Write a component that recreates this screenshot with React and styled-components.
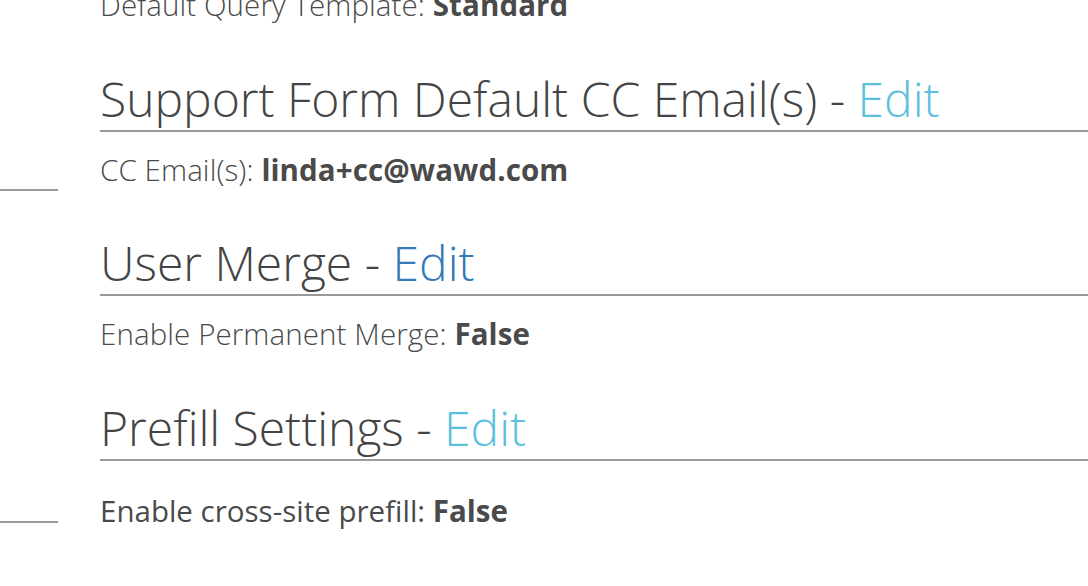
import styled, { createGlobalStyle } from "styled-components";

const GlobalStyle = createGlobalStyle`
  html, body {
    margin: 0;
    padding: 0;
    background: #fff;
    overflow: hidden;
  }
  body {
    font-family: "Open Sans", "Liberation Sans", sans-serif;
    color: #4a4a4a;
  }
`;

const Page = styled.div`
  display: flex;
  width: 1088px;
  height: 586px;
  overflow: hidden;
`;

const Sidebar = styled.nav`
  flex: 0 0 58px;
  display: flex;
  flex-direction: column;
`;

const NavItem = styled.div`
  height: ${(p) => p.$height}px;
  border-bottom: 2px solid #9a9a9a;
`;

const Main = styled.main`
  flex: 1;
  margin-left: 42px;
  margin-top: -14px;
  margin-right: -40px;
`;

const Field = styled.p`
  margin: ${(p) => p.$gap || 0}px 0 0;
  font-size: 29.5px;
  line-height: 37.8px;
  font-weight: ${(p) => (p.$label ? 400 : 300)};
  letter-spacing: ${(p) => (p.$label ? 0 : 0.1)}px;
  white-space: nowrap;

  b {
    font-weight: 700;
  }
`;

const Heading = styled.h2`
  margin: 49px 0 0;
  padding-bottom: 4px;
  font-size: 48px;
  line-height: 1.1;
  font-weight: 300;
  color: #444;
  border-bottom: 2px solid #9a9a9a;
  white-space: nowrap;
`;

const EditLink = styled.a`
  color: ${(p) => (p.$visited ? "#337ab7" : "#5bc0de")};
  text-decoration: none;
  cursor: pointer;
`;

const sections = [
  {
    title: "Support Form Default CC Email(s)",
    label: "CC Email(s):",
    value: "linda+cc@wawd.com",
  },
  {
    title: "User Merge",
    label: "Enable Permanent Merge:",
    value: "False",
    visited: true,
  },
  {
    title: "Prefill Settings",
    label: "Enable cross-site prefill:",
    value: "False",
    isLabel: true,
    gap: 31,
  },
];

export default function App() {
  return (
    <>
      <GlobalStyle />
      <Page>
        <Sidebar>
          <NavItem $height={189} />
          <NavItem $height={330} />
        </Sidebar>
        <Main>
          <Field>
            Default Query Template: <b>Standard</b>
          </Field>
          {sections.map((s) => (
            <section key={s.title}>
              <Heading>
                {s.title} - <EditLink $visited={s.visited}>Edit</EditLink>
              </Heading>
              <Field $gap={s.gap || 19} $label={s.isLabel}>
                {s.label} <b>{s.value}</b>
              </Field>
            </section>
          ))}
        </Main>
      </Page>
    </>
  );
}
